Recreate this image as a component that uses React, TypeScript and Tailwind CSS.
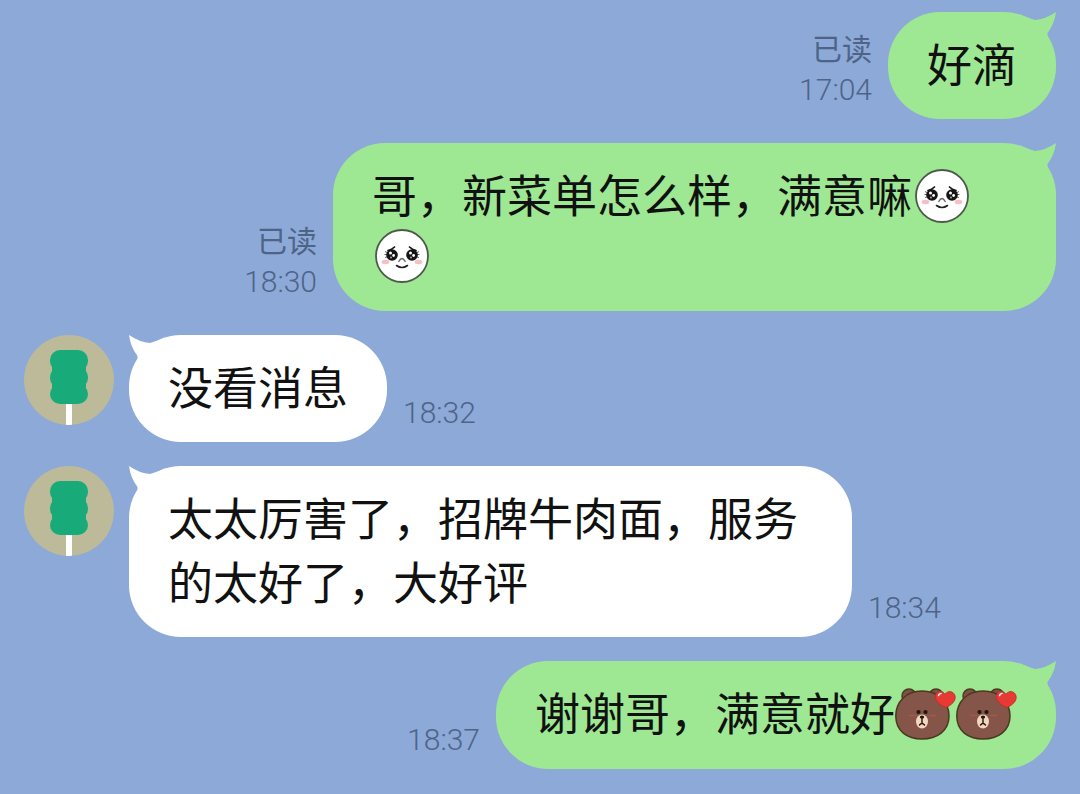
import type { ReactNode } from 'react';

type Message = {
    id: number;
    sent: boolean;
    time: string;
    read?: boolean;
    text: string;
    emojis?: ('face' | 'bear')[];
};

const messages: Message[] = [
    { id: 1, sent: true, time: '17:04', read: true, text: '好滴' },
    { id: 2, sent: true, time: '18:30', read: true, text: '哥，新菜单怎么样，满意嘛', emojis: ['face', 'face'] },
    { id: 3, sent: false, time: '18:32', text: '没看消息' },
    { id: 4, sent: false, time: '18:34', text: '太太厉害了，招牌牛肉面，服务的太好了，大好评' },
    { id: 5, sent: true, time: '18:37', text: '谢谢哥，满意就好', emojis: ['bear', 'bear'] },
];

const FaceEmoji = () => (
    <svg viewBox="0 0 54 54" className="inline-block w-[54px] h-[54px] mx-[3px] align-[-10px]" role="img" aria-label="face">
        <circle cx="27" cy="27" r="26" fill="#fff" stroke="#4c5a49" strokeWidth="1.8" />
        <ellipse cx="10.5" cy="33" rx="3.8" ry="2.2" fill="#f7bfc3" />
        <ellipse cx="43.5" cy="33" rx="3.8" ry="2.2" fill="#f7bfc3" />
        <path d="M10 22.500l4 2M9.500 25.500h4M10 28.500l4-1M44 22.500l-4 2M44.500 25.500h-4M44 28.500l-4-1" stroke="#666" strokeWidth="1" />
        <circle cx="17" cy="26" r="5.800" fill="#151515" />
        <circle cx="37" cy="26" r="5.800" fill="#151515" />
        <path d="M13 21.500q4-1 6.500-3.500M41 21.500q-4-1-6.500-3.500" fill="none" stroke="#151515" strokeWidth="1.700" strokeLinecap="round" />
        <circle cx="15.500" cy="24" r="1.500" fill="#fff" />
        <circle cx="18.600" cy="26.500" r="1.400" fill="#fff" />
        <circle cx="16" cy="28.500" r="1" fill="#aaa" />
        <circle cx="35.500" cy="24" r="1.500" fill="#fff" />
        <circle cx="38.600" cy="26.500" r="1.400" fill="#fff" />
        <circle cx="36" cy="28.500" r="1" fill="#aaa" />
        <path d="M23.800 32.500q3.200-6 6.400 0" fill="none" stroke="#666" strokeWidth="1.400" strokeLinecap="round" />
        <path d="M21.500 36.500q5.500 4 11 0" fill="none" stroke="#222" strokeWidth="1.600" strokeLinecap="round" />
    </svg>
);

const BearEmoji = () => (
    <svg viewBox="0 0 61 54" className="inline-block w-[61px] h-[54px] align-[-10px]" role="img" aria-label="bear">
        <g fill="#7e5145" stroke="#4a3a20" strokeWidth="1.5">
            <circle cx="14" cy="9" r="7" />
            <circle cx="41" cy="9" r="7" />
        </g>
        <circle cx="15" cy="10" r="4" fill="#69402f" />
        <path d="M27 4C43 4 54 15 54 29C54 44 42 52 27 52C12 52 0.800 44 0.800 29C0.800 15 11 4 27 4Z" fill="#865549" stroke="#4a3a20" strokeWidth="1.5" />
        <path d="M14 28.500h7M34 28.500h7" stroke="#a4574b" strokeWidth="1.5" />
        <circle cx="23.500" cy="25" r="2.100" fill="#21150f" />
        <circle cx="30.500" cy="25" r="2.100" fill="#21150f" />
        <ellipse cx="27" cy="34.500" rx="6" ry="7" fill="#f3d6bd" />
        <ellipse cx="27" cy="30" rx="2.200" ry="1.600" fill="#21150f" />
        <path d="M27 31v5.500M24.500 38q2.500-3 5 0" fill="none" stroke="#21150f" strokeWidth="1.4" strokeLinecap="round" />
        <path d="M51 20.500C44 18 39.500 13 40.500 8.500C41.500 3.500 47.500 3 50 7.500C52.500 3 59 4 60 9C61 14 56.500 18 51 20.500Z" fill="#e83a35" stroke="#bd302b" strokeWidth="1" />
        <path d="M43.500 8.500q.5-2 2.500-2" fill="none" stroke="#fff" strokeWidth="1.5" strokeLinecap="round" />
    </svg>
);

const Avatar = () => (
    <svg viewBox="0 0 90 90" className="w-[90px] h-[90px] shrink-0 rounded-full bg-[#bcba98]" role="img" aria-label="avatar">
        <rect x="42" y="66" width="6" height="24" fill="#fff" />
        <g fill="#18aa78">
            <rect x="26" y="15" width="38" height="21" rx="10" />
            <rect x="26" y="32" width="38" height="21" rx="10" />
            <rect x="26" y="49" width="38" height="20" rx="10" />
            <rect x="28" y="26" width="34" height="32" />
        </g>
    </svg>
);

// Small curved tail at the top corner, mirrored for received messages
const Tail = ({ sent }: { sent: boolean }) => (
    <svg
        viewBox="0 0 36 36"
        className={`absolute top-0 w-9 h-9 ${sent ? 'right-0 text-[#9ee894]' : 'left-0 -scale-x-100 text-white'}`}
        aria-hidden="true"
    >
        <path d="M0 2.500Q9 6 15 8Q25 7.500 36 0Q34.500 12 27.500 21L27 34L6 30Z" fill="currentColor" />
    </svg>
);

type BubbleProps = { sent: boolean; hasEmoji: boolean; children: ReactNode };

const Bubble = ({ sent, hasEmoji, children }: BubbleProps) => (
    <div
        className={`relative max-w-[723px] rounded-[52px] px-[39px] text-[45px] text-[#111] ${sent ? 'bg-[#9ee894]' : 'bg-white'} ${hasEmoji ? 'pt-[21px] pb-[27px] leading-[60px]' : 'pt-[19px] pb-6 leading-[64px]'}`}
    >
        <Tail sent={sent} />
        <p className="relative">{children}</p>
    </div>
);

const App = () => {
    return (
        <main className="min-h-screen bg-[#8da9d8] px-6 pt-3 pb-6 flex flex-col gap-6 font-['Noto_Sans_CJK_SC',sans-serif]">
            {messages.map((message) => (
                <div key={message.id} className={`flex items-start ${message.sent ? 'flex-row-reverse' : 'gap-[15px]'}`}>
                    {!message.sent && <Avatar />}
                    <div className={`flex flex-1 min-w-0 items-end gap-4 ${message.sent ? 'flex-row-reverse' : ''}`}>
                        <Bubble sent={message.sent} hasEmoji={!!message.emojis}>
                            {message.text}
                            {message.emojis?.map((emoji, i) => (
                                emoji === 'face' ? <FaceEmoji key={i} /> : <BearEmoji key={i} />
                            ))}
                        </Bubble>
                        <div className="shrink-0 pb-[9px] text-right text-[30px] leading-10 text-[#4e6487] font-[Roboto,'Noto_Sans_CJK_SC',sans-serif]">
                            {message.read && <div>已读</div>}
                            <time className="block font-light">{message.time}</time>
                        </div>
                    </div>
                </div>
            ))}
        </main>
    );
};

export default App;
